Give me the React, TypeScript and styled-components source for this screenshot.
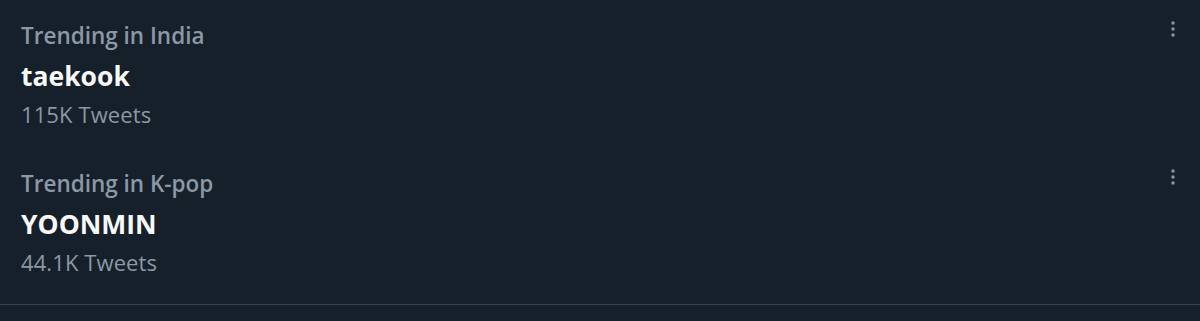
import React from 'react';
import styled, { createGlobalStyle } from 'styled-components';

const GlobalStyle = createGlobalStyle`
  html, body {
    margin: 0;
    padding: 0;
    background: #16202a;
  }
  body {
    font-family: 'Open Sans', 'Noto Sans', sans-serif;
    -webkit-font-smoothing: antialiased;
  }
`;

const Panel = styled.div`
  width: 1200px;
  height: 321px;
  background: #16202a;
  box-sizing: border-box;
  display: flex;
  flex-direction: column;
`;

const List = styled.div`
  border-bottom: 1px solid #38444d;
  padding-bottom: 8px;
`;

const TrendRow = styled.div`
  display: flex;
  justify-content: space-between;
  align-items: flex-start;
  padding: 16px 24px 12px 21px;
  height: 148px;
  box-sizing: border-box;
`;

const TrendInfo = styled.div`
  display: flex;
  flex-direction: column;
`;

const Context = styled.span`
  font-size: 22.5px;
  line-height: 40px;
  font-weight: 600;
  color: #8b98a5;
`;

const Topic = styled.span`
  font-size: 26.5px;
  line-height: 40px;
  font-weight: 700;
  color: #f7f9f9;
`;

const Count = styled.span`
  font-size: 22px;
  line-height: 36px;
  font-weight: 400;
  letter-spacing: 0.1px;
  color: #8b98a5;
`;

const MoreButton = styled.button`
  background: none;
  border: none;
  padding: 0;
  margin-top: 5px;
  width: 6px;
  height: 16px;
  display: flex;
  align-items: center;
  justify-content: center;
  cursor: pointer;
`;

const MoreIcon = () => (
  <svg width="4" height="16" viewBox="0 0 4 16">
    <rect x="0.5" y="0.5" width="3" height="3" rx="0.6" fill="#8b98a5" />
    <rect x="0.5" y="6.5" width="3" height="3" rx="0.6" fill="#8b98a5" />
    <rect x="0.5" y="12.5" width="3" height="3" rx="0.6" fill="#8b98a5" />
  </svg>
);

const trends = [
  { context: 'Trending in India', topic: 'taekook', count: '115K Tweets' },
  { context: 'Trending in K-pop', topic: 'YOONMIN', count: '44.1K Tweets' },
];

export default function App() {
  return (
    <>
      <GlobalStyle />
      <Panel>
        <List>
          {trends.map((t) => (
            <TrendRow key={t.topic}>
              <TrendInfo>
                <Context>{t.context}</Context>
                <Topic>{t.topic}</Topic>
                <Count>{t.count}</Count>
              </TrendInfo>
              <MoreButton aria-label="More">
                <MoreIcon />
              </MoreButton>
            </TrendRow>
          ))}
        </List>
      </Panel>
    </>
  );
}
